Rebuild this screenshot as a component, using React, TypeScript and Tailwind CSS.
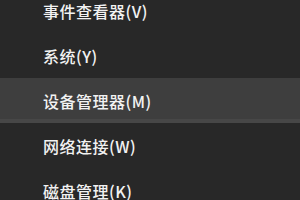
const items = [
  { label: "事件查看器(V)" },
  { label: "系统(Y)" },
  { label: "设备管理器(M)", active: true },
  { label: "网络连接(W)" },
  { label: "磁盘管理(K)" },
];

export default function App() {
  return (
    <div className="w-[300px] h-[200px] overflow-hidden bg-[#282828] font-['Noto_Sans_CJK_SC','Noto_Sans',sans-serif]">
      <div className="-mt-[12px] flex flex-col">
        {items.map((item) => (
          <div
            key={item.label}
            className={
              item.active
                ? "h-[45px] flex items-center pl-[43px] bg-[#3e3e3e] border-b-[4px] border-[#474747]"
                : "h-[45px] flex items-center pl-[43px]"
            }
          >
            <span
              className={
                item.active
                  ? "mt-[4px] text-[16px] leading-none font-medium tracking-[0.5px] text-[#f2f2f2]"
                  : "text-[16px] leading-none font-medium tracking-[0.5px] text-[#f2f2f2]"
              }
            >
              {item.label}
            </span>
          </div>
        ))}
      </div>
    </div>
  );
}
